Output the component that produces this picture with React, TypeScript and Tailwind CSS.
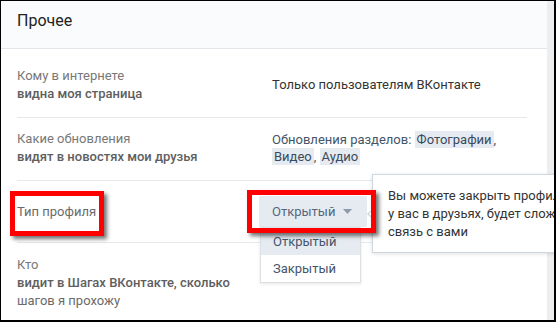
import React from 'react'

function RedFrame({ className }: { className: string }) {
  return (
    <div
      className={`absolute border-[5px] border-[#ff0000] shadow-[3px_3px_4px_rgba(0,0,0,0.55)] pointer-events-none ${className}`}
    />
  )
}

function Tag({ children }: { children: React.ReactNode }) {
  return <span className="bg-[#e5ebf1] text-[#3b4a5c] px-[2px] py-[1px]">{children}</span>
}

export default function App() {
  return (
    <div
      className="relative w-[556px] h-[322px] overflow-hidden bg-white border-t border-l border-r-2 border-b-2 border-black text-[13px]"
      style={{ fontFamily: 'Roboto, "Noto Sans", Arial, sans-serif' }}
    >
      <div className="flex h-full">
        {/* карточка настроек */}
        <div className="flex-1 flex flex-col">
          <div className="h-[48px] bg-[#fafbfc] border-b border-[#e2e6ea] pl-[16px] pt-[10px] text-[16px] leading-[20px] text-[#222]">
            Прочее
          </div>

          <div className="pl-[16px] pr-[20px]">
            <div className="flex items-center pt-[18px] pb-[14px] border-b border-[#e7e8ec] leading-[18px]">
              <div className="w-[255px] shrink-0">
                <div className="text-[#787878]">Кому в интернете</div>
                <div className="text-[#5e5e5e] font-medium">видна моя страница</div>
              </div>
              <div className="text-[#333]">Только пользователям ВКонтакте</div>
            </div>

            <div className="flex pt-[12px] pb-[14px] border-b border-[#e7e8ec] leading-[18px]">
              <div className="w-[255px] shrink-0">
                <div className="text-[#787878]">Какие обновления</div>
                <div className="text-[#5e5e5e] font-medium">видят в новостях мои друзья</div>
              </div>
              <div className="text-[#445566] leading-[17px] pt-[1px]">
                Обновления разделов: <Tag>Фотографии</Tag>,
                <br />
                <Tag>Видео</Tag>, <Tag>Аудио</Tag>
              </div>
            </div>

            <div className="flex items-center py-[15px] border-b border-[#e7e8ec]">
              <div className="w-[255px] shrink-0 text-[#6a6a6a] leading-[18px]">Тип профиля</div>
              <div className="relative -ml-[13px]">
                <div className="h-[31px] w-[108px] bg-[#e5ebf1] flex items-center pl-[13px] text-[#55677d]">
                  Открытый
                  <svg width="9" height="5" viewBox="0 0 9 5" className="ml-[8px]">
                    <path d="M0 0h9L4.5 5z" fill="#8d9bab" />
                  </svg>
                </div>
                <div className="absolute left-[1px] top-[31px] w-[101px] bg-white border border-[#dce1e6] shadow-[0_1px_3px_rgba(0,0,0,0.1)] text-[#45566b] z-10">
                  <div className="h-[27px] flex items-center pl-[12px] bg-[#e5ebf1]">Открытый</div>
                  <div className="h-[27px] flex items-center pl-[12px]">Закрытый</div>
                </div>
              </div>
            </div>

            <div className="pt-[13px] leading-[18px]">
              <div className="text-[#787878]">Кто</div>
              <div className="text-[#5e5e5e] font-medium">видит в Шагах ВКонтакте, сколько</div>
              <div className="text-[#6a6a6a]">шагов я прохожу</div>
            </div>
          </div>
        </div>

        <div className="w-[7px] bg-[#edeef0]" />
      </div>

      {/* подсказка */}
      <div className="absolute left-[371px] top-[173px] w-[260px] bg-white border border-[#cfd6de] shadow-[0_1px_4px_rgba(0,0,0,0.12)] pl-[15px] pt-[12px] pb-[11px] text-[#333] leading-[18px] whitespace-nowrap z-20">
        <div>Вы можете закрыть профиль, и тогда тем, кого нет</div>
        <div>у вас в друзьях, будет сложнее выйти на</div>
        <div>связь с вами</div>
        <svg width="6" height="10" viewBox="0 0 6 10" className="absolute -left-[6px] top-[34px]">
          <path d="M6 0L0 5l6 5z" fill="#c3ccd6" />
          <path d="M6 1.3L1.5 5 6 8.7z" fill="#fff" />
        </svg>
      </div>

      <RedFrame className="left-[9px] top-[190px] w-[94px] h-[45px] z-30" />
      <RedFrame className="left-[246px] top-[189px] w-[129px] h-[43px] z-30" />
    </div>
  )
}
